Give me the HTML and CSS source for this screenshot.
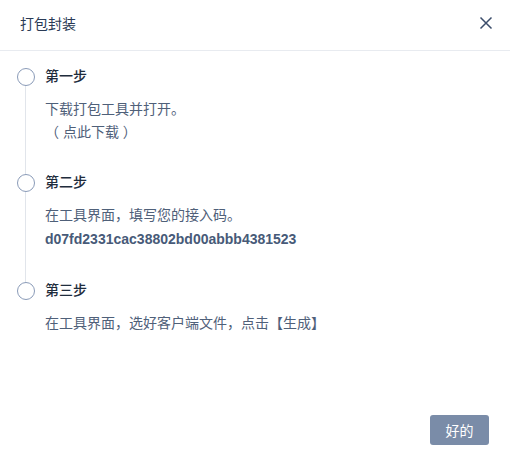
FILE: index.html
```html
<!DOCTYPE html>
<html lang="zh-CN">
<head>
    <meta charset="UTF-8">
    <title>打包封装</title>
    <link rel="stylesheet" href="styles.css">
</head>
<body>
    <div class="dialog">
        <div class="dialog-header">
            <span class="dialog-title">打包封装</span>
            <button class="close">
                <svg width="14" height="14" viewBox="0 0 14 14">
                    <path d="M1.5 1.5 L12.5 12.5 M12.5 1.5 L1.5 12.5" stroke="#3b4d6b" stroke-width="1.5" fill="none"/>
                </svg>
            </button>
        </div>
        <div class="dialog-body">
            <ul class="steps">
                <li class="step">
                    <div class="step-title">第一步</div>
                    <div class="step-text">下载打包工具并打开。</div>
                    <div class="step-text">（ 点此下载 ）</div>
                </li>
                <li class="step">
                    <div class="step-title">第二步</div>
                    <div class="step-text">在工具界面，填写您的接入码。</div>
                    <div class="step-text code">d07fd2331cac38802bd00abbb4381523</div>
                </li>
                <li class="step last">
                    <div class="step-title">第三步</div>
                    <div class="step-text">在工具界面，选好客户端文件，点击【生成】</div>
                </li>
            </ul>
        </div>
        <div class="dialog-footer">
            <button class="btn-ok">好的</button>
        </div>
    </div>
</body>
</html>
```

FILE: styles.css
```css
* {
    box-sizing: border-box;
}

body {
    margin: 0;
    background: #fff;
    font-family: "Liberation Sans", "Noto Sans CJK SC", sans-serif;
    color: #1f2d3d;
}

.dialog {
    width: 510px;
    height: 458px;
    display: flex;
    flex-direction: column;
    background: #fff;
}

.dialog-header {
    height: 51px;
    border-bottom: 1px solid #e8ebf0;
    display: flex;
    align-items: center;
    justify-content: space-between;
    padding: 0 17px 0 20px;
}

.dialog-title {
    font-size: 14px;
    color: #2a3a55;
    padding-bottom: 4px;
}

.close {
    border: none;
    background: none;
    padding: 0;
    margin-bottom: 4px;
    cursor: pointer;
    display: flex;
}

.dialog-body {
    flex: 1;
    padding: 16px 0 0 17px;
}

.steps {
    list-style: none;
    margin: 0;
    padding: 0;
}

.step {
    position: relative;
    padding: 0 0 29px 28px;
}

.step::before {
    content: "";
    position: absolute;
    left: 7.5px;
    top: 16px;
    bottom: -4px;
    width: 1px;
    background: #e1e5eb;
}

.step::after {
    content: "";
    position: absolute;
    left: 0;
    top: 1px;
    width: 16px;
    height: 16px;
    border: 1.5px solid #8a9bb8;
    border-radius: 50%;
    background: #fff;
}

.step.last::before {
    display: none;
}

.step-title {
    font-size: 14px;
    font-weight: 500;
    line-height: 18px;
    color: #1f2d3d;
    margin-bottom: 13px;
}

.step-text {
    font-size: 14px;
    line-height: 23px;
    color: #4f6079;
}

.code {
    font-weight: 700;
    line-height: 25px;
    color: #475a78;
}

.dialog-footer {
    display: flex;
    justify-content: flex-end;
    padding: 0 21px 13px 0;
}

.btn-ok {
    width: 59px;
    height: 30px;
    border: none;
    border-radius: 3px;
    background: #7a8ca8;
    color: #fff;
    font-size: 14px;
    font-family: "Noto Sans CJK SC", sans-serif;
    cursor: pointer;
}
```
